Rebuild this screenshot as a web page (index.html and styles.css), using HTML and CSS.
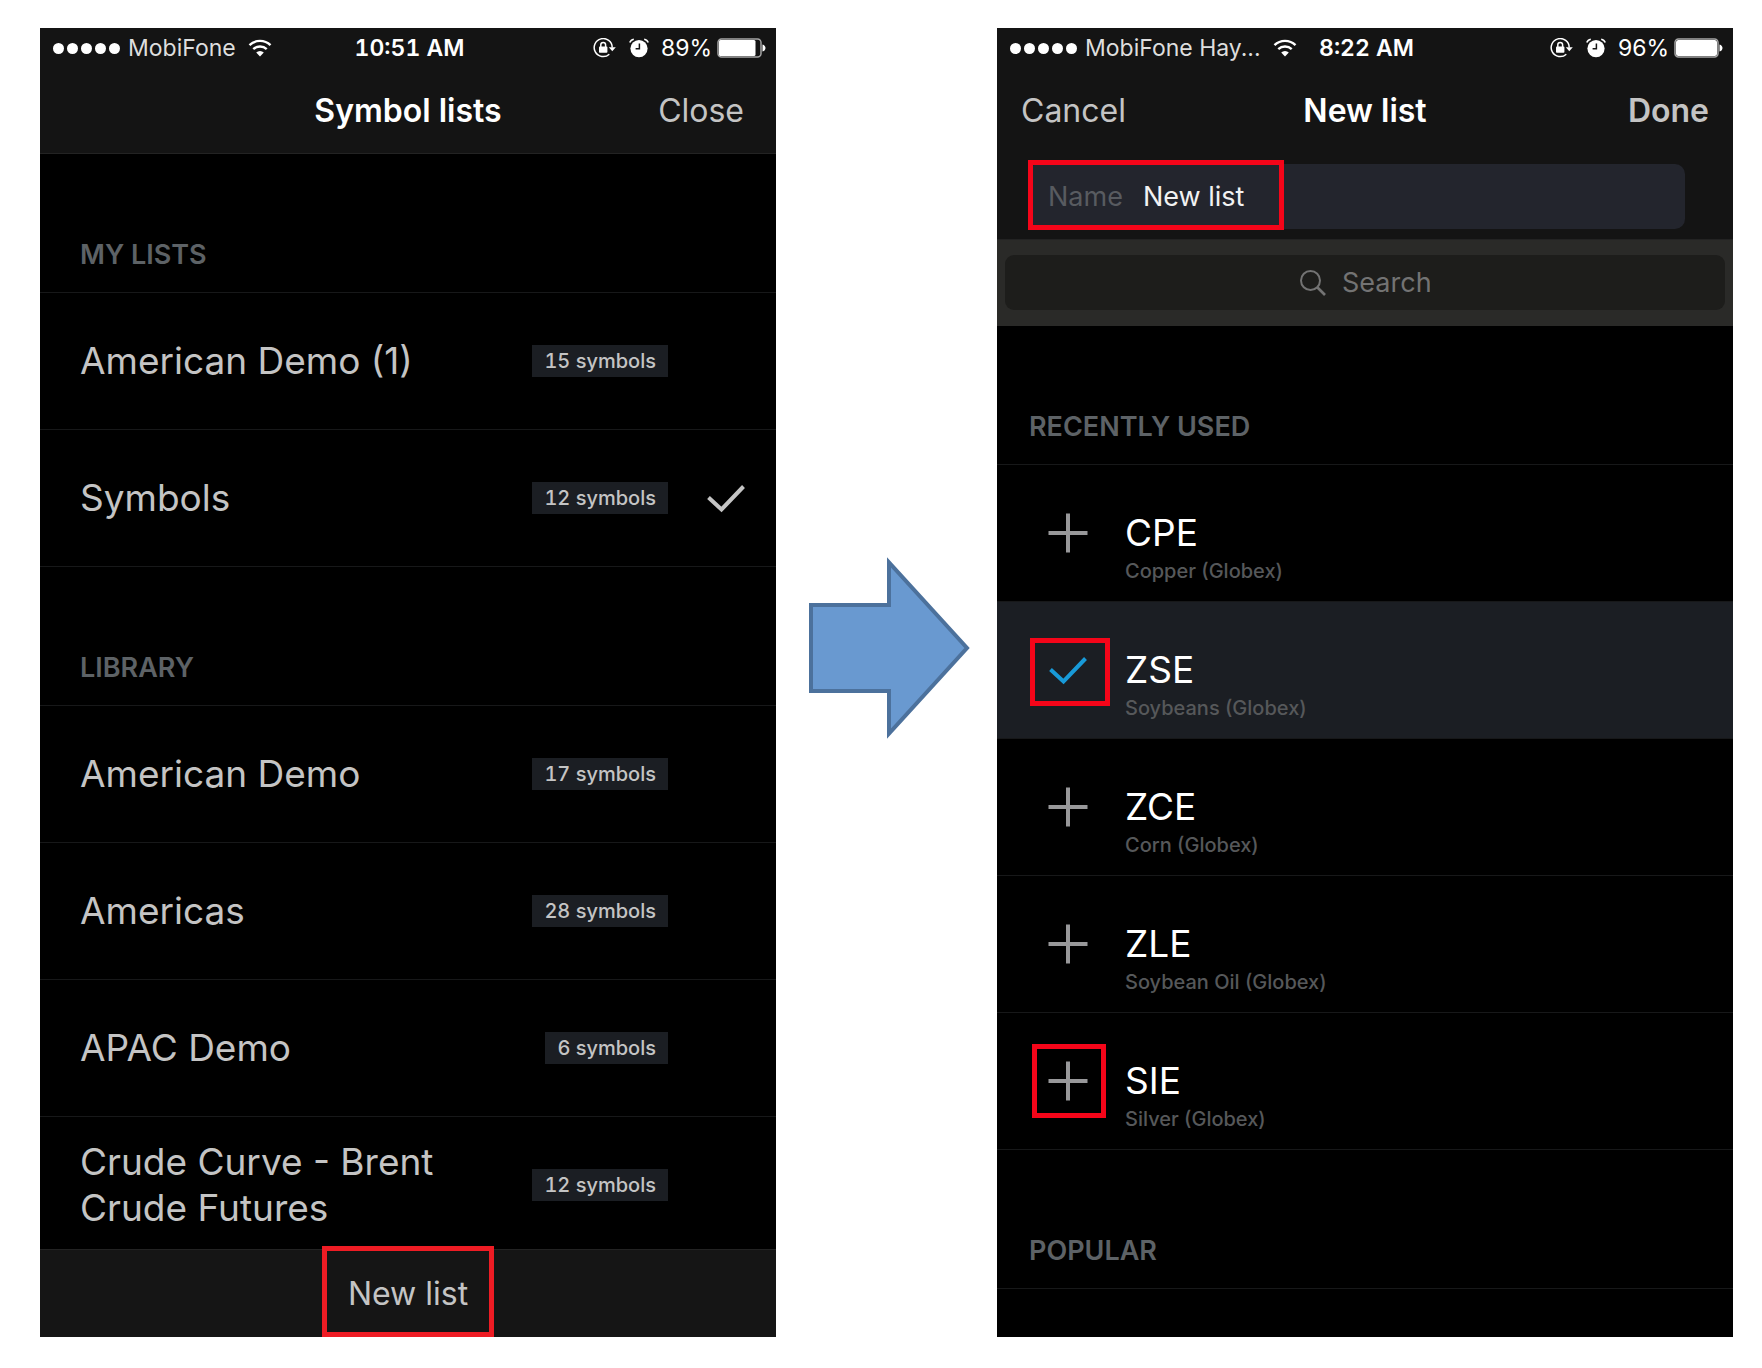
FILE: index.html
```html
<!DOCTYPE html>
<html lang="en">
<head>
    <meta charset="UTF-8">
    <meta name="viewport" content="width=device-width, initial-scale=1.0">
    <title>Create a new symbol list</title>
    <link rel="stylesheet" href="styles.css">
</head>
<body>
    <!-- shared icons -->
    <svg class="sprite" aria-hidden="true">
        <symbol id="wifi" viewBox="0 0 24 18">
            <path d="M1.5 6.2a15 15 0 0 1 21 0" fill="none" stroke="currentColor" stroke-width="2.4"/>
            <path d="M5.3 10.2a9.6 9.6 0 0 1 13.4 0" fill="none" stroke="currentColor" stroke-width="2.4"/>
            <path d="M8.2 13.6a5.4 5.4 0 0 1 7.6 0L12 17.6z" fill="currentColor"/>
        </symbol>
        <symbol id="lock" viewBox="0 0 23 20">
            <path d="M19.2 9.5A9 9 0 1 0 16.3 16.2" fill="none" stroke="currentColor" stroke-width="1.5"/>
            <path d="M15.8 9.2h7l-3.5 4z" fill="currentColor"/>
            <rect x="6" y="8.6" width="8.4" height="6.2" rx="0.8" fill="currentColor"/>
            <path d="M7.8 9V6.8a2.4 2.4 0 0 1 4.8 0V9" fill="none" stroke="currentColor" stroke-width="1.5"/>
        </symbol>
        <symbol id="alarm" viewBox="0 0 20 20">
            <circle cx="10" cy="10.6" r="8.6" fill="currentColor"/>
            <path d="M0.8 4.6A5 5 0 0 1 4.8 1.2M19.2 4.6A5 5 0 0 0 15.2 1.2" fill="none" stroke="currentColor" stroke-width="1.6"/>
            <path d="M10.4 5.5v5.3H6.6" fill="none" stroke="#141414" stroke-width="1.5"/>
        </symbol>
        <symbol id="check" viewBox="0 0 40 40">
            <path d="M2.5 19.5L15.5 31.5L37.5 8.5" fill="none" stroke="currentColor" stroke-width="4"/>
        </symbol>
        <symbol id="plus" viewBox="0 0 40 40">
            <path d="M20 0.5v39M0.5 20h39" fill="none" stroke="currentColor" stroke-width="4"/>
        </symbol>
    </svg>

    <main class="page">
        <section class="phone">
            <header class="header">
                <div class="status">
                    <div class="status-left">
                        <span class="dots"><i></i><i></i><i></i><i></i><i></i></span>
                        <span>MobiFone</span>
                        <svg class="wifi"><use href="#wifi"/></svg>
                    </div>
                    <span class="time">10:51 AM</span>
                    <div class="status-right">
                        <svg class="lock"><use href="#lock"/></svg>
                        <svg class="alarm"><use href="#alarm"/></svg>
                        <span>89%</span>
                        <svg class="battery" viewBox="0 0 49 20">
                            <rect x="1" y="1" width="43" height="18" rx="3.5" fill="none" stroke="#a5a5a5" stroke-width="1.5"/>
                            <rect x="2" y="2" width="36.5" height="16" rx="1.5" fill="#fff"/>
                            <path d="M45.5 6.5c4 1 4 6 0 7z" fill="#fff"/>
                        </svg>
                    </div>
                </div>
                <nav class="nav nav-lists">
                    <h1>Symbol lists</h1>
                    <button type="button" class="nav-right">Close</button>
                </nav>
            </header>

            <div class="content">
                <h2>MY LISTS</h2>
                <ul>
                    <li><button type="button" class="row"><span class="name">American Demo (1)</span><span class="badge">15 symbols</span><span class="mark"></span></button></li>
                    <li><button type="button" class="row"><span class="name">Symbols</span><span class="badge">12 symbols</span><span class="mark"><svg><use href="#check"/></svg></span></button></li>
                </ul>
                <h2>LIBRARY</h2>
                <ul>
                    <li><button type="button" class="row"><span class="name">American Demo</span><span class="badge">17 symbols</span><span class="mark"></span></button></li>
                    <li><button type="button" class="row"><span class="name">Americas</span><span class="badge">28 symbols</span><span class="mark"></span></button></li>
                    <li><button type="button" class="row"><span class="name">APAC Demo</span><span class="badge">6 symbols</span><span class="mark"></span></button></li>
                    <li><button type="button" class="row"><span class="name">Crude Curve - Brent Crude Futures</span><span class="badge">12 symbols</span><span class="mark"></span></button></li>
                </ul>
            </div>

            <footer class="footer">
                <button type="button">New list<span class="highlight highlight-new"></span></button>
            </footer>
        </section>

        <div class="arrow">
            <svg viewBox="0 0 162 184">
                <path d="M3 49H81V6.5L159 92L81 177.5V135H3z" fill="#6999d0" stroke="#4c719c" stroke-width="4"/>
            </svg>
        </div>

        <section class="phone">
            <header class="header">
                <div class="status">
                    <div class="status-left">
                        <span class="dots"><i></i><i></i><i></i><i></i><i></i></span>
                        <span>MobiFone Hay...</span>
                        <svg class="wifi"><use href="#wifi"/></svg>
                    </div>
                    <span class="time">8:22 AM</span>
                    <div class="status-right">
                        <svg class="lock"><use href="#lock"/></svg>
                        <svg class="alarm"><use href="#alarm"/></svg>
                        <span>96%</span>
                        <svg class="battery" viewBox="0 0 49 20">
                            <rect x="1" y="1" width="43" height="18" rx="3.5" fill="none" stroke="#a5a5a5" stroke-width="1.5"/>
                            <rect x="2" y="2" width="41" height="16" rx="2.5" fill="#fff"/>
                            <path d="M45.5 6.5c4 1 4 6 0 7z" fill="#fff"/>
                        </svg>
                    </div>
                </div>
                <nav class="nav">
                    <button type="button" class="nav-left">Cancel</button>
                    <h1>New list</h1>
                    <button type="button" class="nav-right done">Done</button>
                </nav>
                <div class="field">
                    <label for="listName">Name</label>
                    <input type="text" id="listName" name="listName" value="New list">
                    <span class="highlight highlight-name"></span>
                </div>
            </header>

            <div class="search">
                <label class="search-box">
                    <svg viewBox="0 0 26 26">
                        <circle cx="10.5" cy="10.5" r="9.5" fill="none" stroke="currentColor" stroke-width="2"/>
                        <path d="M17 17L25 25" stroke="currentColor" stroke-width="2.6"/>
                    </svg>
                    <input type="text" name="search" placeholder="Search" aria-label="Search">
                </label>
            </div>

            <div class="content content-new">
                <h2>RECENTLY USED</h2>
                <ul>
                    <li class="symbol">
                        <button type="button" aria-label="Add CPE"><svg><use href="#plus"/></svg></button>
                        <div><strong>CPE</strong><small>Copper (Globex)</small></div>
                    </li>
                    <li class="symbol selected">
                        <button type="button" aria-label="Remove ZSE"><svg><use href="#check"/></svg><span class="highlight highlight-check"></span></button>
                        <div><strong>ZSE</strong><small>Soybeans (Globex)</small></div>
                    </li>
                    <li class="symbol">
                        <button type="button" aria-label="Add ZCE"><svg><use href="#plus"/></svg></button>
                        <div><strong>ZCE</strong><small>Corn (Globex)</small></div>
                    </li>
                    <li class="symbol">
                        <button type="button" aria-label="Add ZLE"><svg><use href="#plus"/></svg></button>
                        <div><strong>ZLE</strong><small>Soybean Oil (Globex)</small></div>
                    </li>
                    <li class="symbol">
                        <button type="button" aria-label="Add SIE"><svg><use href="#plus"/></svg><span class="highlight highlight-plus"></span></button>
                        <div><strong>SIE</strong><small>Silver (Globex)</small></div>
                    </li>
                </ul>
                <h2>POPULAR</h2>
            </div>
        </section>
    </main>
</body>
</html>
```

FILE: styles.css
```css
* {
    box-sizing: border-box;
}
body {
    margin: 0;
    background-color: #fff;
    font-family: Inter, "Liberation Sans", sans-serif;
}
h1, h2, ul {
    margin: 0;
    padding: 0;
}
ul {
    list-style: none;
}
button {
    padding: 0;
    border: none;
    background: none;
    color: inherit;
    font: inherit;
    cursor: pointer;
}
input {
    padding: 0;
    border: none;
    outline: none;
    background: none;
    font: inherit;
}
.sprite {
    position: absolute;
    width: 0;
    height: 0;
}
.page {
    display: flex;
    height: 100vh;
    min-height: 900px;
    padding: 28px 29px 31px 40px;
}
.phone {
    display: flex;
    flex: 1;
    flex-direction: column;
    min-width: 0;
    background-color: #000;
    color: #c4c4c4;
}
.arrow {
    display: flex;
    flex: 0 0 221px;
    align-items: center;
    justify-content: center;
    padding: 0 0 70px 5px;
}
.arrow svg {
    width: 162px;
    height: 184px;
}

/* status bar and navigation */
.header {
    flex: none;
    border-bottom: 1px solid #232323;
    background-color: #141414;
}
.status {
    display: grid;
    grid-template-columns: 1fr auto 1fr;
    align-items: center;
    height: 40px;
    padding: 0 10px 0 13px;
    color: #fff;
    font-size: 23px;
}
.status-left, .status-right {
    display: flex;
    align-items: center;
    white-space: nowrap;
}
.status-left {
    gap: 8px;
    color: #dedede;
}
.status-right {
    justify-content: flex-end;
}
.dots {
    display: flex;
    gap: 3px;
}
.dots i {
    width: 11px;
    height: 11px;
    border-radius: 50%;
    background-color: #fff;
}
.time {
    font-weight: 600;
    font-variant-numeric: tabular-nums;
}
.wifi {
    width: 24px;
    height: 18px;
    margin-left: 4px;
    color: #fff;
}
.lock {
    width: 23px;
    height: 20px;
    margin-right: 13px;
}
.alarm {
    width: 20px;
    height: 20px;
    margin-right: 12px;
}
.battery {
    width: 49px;
    height: 20px;
    margin-left: 5px;
}
.nav {
    display: grid;
    grid-template-columns: 1fr auto 1fr;
    align-items: center;
    height: 85px;
    padding: 0 24px;
    font-size: 32px;
}
.nav-lists {
    padding: 0 32px;
}
.nav h1 {
    grid-column: 2;
    color: #fff;
    font-size: 32px;
    font-weight: 600;
}
.nav-left {
    justify-self: start;
}
.nav-right {
    grid-column: 3;
    justify-self: end;
}
.done {
    font-weight: 600;
}

/* lists */
.content {
    flex: 1;
    min-height: 0;
    overflow: hidden;
}
.content h2 {
    height: 139px;
    padding: 85px 40px 0;
    border-bottom: 1px solid #171819;
    color: #5d6266;
    font-size: 27px;
    font-weight: 600;
    line-height: 32px;
}
.content-new h2 {
    padding: 85px 32px 0;
}
.row {
    display: flex;
    align-items: center;
    width: 100%;
    height: 137px;
    padding: 0 30px 0 40px;
    border-bottom: 1px solid #171819;
    text-align: left;
}
.name {
    flex: 1;
    padding-right: 80px;
    font-size: 37px;
    line-height: 46px;
}
.badge {
    padding: 0 12px;
    background-color: #1b1e23;
    font-size: 20px;
    font-weight: 500;
    font-variant-numeric: tabular-nums;
    line-height: 32px;
}
.mark {
    display: flex;
    justify-content: flex-end;
    width: 78px;
}
.mark svg {
    width: 40px;
    height: 40px;
}
.footer {
    display: flex;
    flex: none;
    justify-content: center;
    height: 88px;
    border-top: 1px solid #232323;
    background-color: #151515;
    font-size: 32px;
}
.footer button {
    position: relative;
}

/* new list form */
.field {
    position: relative;
    display: flex;
    align-items: center;
    gap: 20px;
    height: 65px;
    margin: 11px 48px 10px 31px;
    padding: 0 20px;
    border-radius: 10px;
    background-color: #23252d;
    font-size: 27px;
}
.field label {
    color: #585b60;
}
.field input {
    flex: 1;
    min-width: 0;
    color: #f2f2f2;
}
.search {
    flex: none;
    padding: 15px 8px 16px;
    background-color: #2a2a28;
}
.search-box {
    display: flex;
    align-items: center;
    justify-content: center;
    gap: 16px;
    height: 55px;
    border-radius: 9px;
    background-color: #1d1d1b;
    color: #737373;
    font-size: 27px;
}
.search-box svg {
    width: 26px;
    height: 26px;
}
.search-box input {
    width: 88px;
    color: #c4c4c4;
}
.search-box input::placeholder {
    color: #737373;
    opacity: 1;
}
.symbol {
    display: flex;
    height: 137px;
    padding-left: 51px;
    border-bottom: 1px solid #171819;
}
.symbol.selected {
    background-color: #1b1e23;
}
.symbol button {
    position: relative;
    display: flex;
    align-items: center;
    width: 77px;
    color: #98989a;
}
.symbol.selected button {
    color: #189ad8;
}
.symbol svg {
    width: 40px;
    height: 40px;
}
.symbol strong, .symbol small {
    display: block;
}
.symbol strong {
    padding-top: 45px;
    color: #fff;
    font-size: 37px;
    font-weight: 400;
    line-height: 46px;
}
.symbol small {
    color: #56585a;
    font-size: 20px;
    font-weight: 500;
    line-height: 30px;
}

/* red callouts */
.highlight {
    position: absolute;
    border: 5px solid #f50519;
    pointer-events: none;
}
.highlight-new {
    inset: -4px -26px 0;
    border-color: #ee1c24;
}
.highlight-name {
    top: -4px;
    left: 0;
    width: 256px;
    height: 70px;
}
.highlight-check {
    top: 36px;
    left: -18px;
    width: 80px;
    height: 68px;
}
.highlight-plus {
    top: 31px;
    left: -16px;
    width: 74px;
    height: 74px;
}
```
